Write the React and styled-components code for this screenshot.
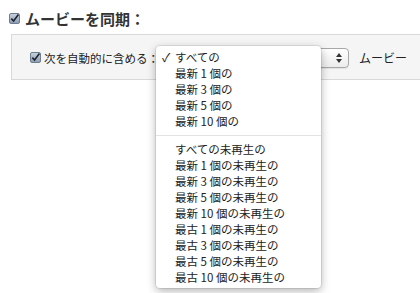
import React from 'react';
import styled, { createGlobalStyle } from 'styled-components';

const GlobalStyle = createGlobalStyle`
    body {
        margin: 0;
        background: #fff;
        font-family: "Noto Sans CJK JP", "Noto Sans", sans-serif;
        color: #222;
    }
`;

const Page = styled.div`
    width: 420px;
    height: 293px;
    overflow: hidden;
    padding: 8px 0 0 9px;
    box-sizing: border-box;
`;

const TitleRow = styled.div`
    display: flex;
    align-items: center;
    gap: 5px;
    height: 20px;
`;

const Title = styled.span`
    font-size: 15px;
    font-weight: bold;
    color: #333;
`;

const Box = styled.div`
    margin: 6px 0 0 2px;
    height: 44px;
    background: #f5f5f5;
    border: 1px solid #d9d9d9;
    border-right: none;
    display: flex;
    align-items: center;
    padding-left: 18px;
`;

const Row = styled.div`
    display: flex;
    align-items: center;
    gap: 3px;
    margin-top: 1px;
`;

const Label = styled.span`
    font-size: 11.5px;
    color: #222;
`;

const SelectWrap = styled.div`
    position: relative;
    width: 187px;
    height: 20px;
`;

const Select = styled.div`
    height: 100%;
    border: 1px solid #a8a8a8;
    border-radius: 4px;
    background: linear-gradient(#ffffff, #ececec);
    box-sizing: border-box;
    display: flex;
    align-items: center;
    justify-content: flex-end;
    padding-right: 6px;
    box-shadow: 0 1px 1px rgba(0, 0, 0, 0.08);
`;

const After = styled.span`
    font-size: 12px;
    margin-left: 7px;
`;

const Popup = styled.div`
    position: absolute;
    left: -6px;
    top: -2px;
    width: 165px;
    padding: 3px 0;
    background: #fff;
    border-radius: 4px;
    box-shadow: 0 0 0 1px rgba(0, 0, 0, 0.08), 0 3px 10px rgba(0, 0, 0, 0.3);
    z-index: 5;
`;

const Item = styled.div`
    height: 16px;
    line-height: 16px;
    font-size: 11.5px;
    color: #222;
    padding-left: 19px;
    position: relative;
    white-space: nowrap;
`;

const Check = styled.span`
    position: absolute;
    left: 6px;
    top: 0;
    font-size: 12px;
`;

const Separator = styled.div`
    height: 1px;
    background: #e3e3e3;
    margin: 6px 0 5px;
`;

const CheckBox = ({ size = 11 }) => (
    <svg width={size} height={size} viewBox="0 0 11 11">
        <defs>
            <linearGradient id="cb" x1="0" y1="0" x2="0" y2="1">
                <stop offset="0" stopColor="#c9d3de" />
                <stop offset="1" stopColor="#8c9bb0" />
            </linearGradient>
        </defs>
        <rect x="0.5" y="0.5" width="10" height="10" rx="1.5" fill="url(#cb)" stroke="#6f7d90" />
        <path d="M2.3 5.6 L4.6 8 L9.4 1.6" fill="none" stroke="#1d2430" strokeWidth="1.6" />
    </svg>
);

const Arrows = () => (
    <svg width="6" height="10" viewBox="0 0 6 10">
        <path d="M3 0 L6 4 L0 4 Z M3 10 L6 6 L0 6 Z" fill="#333" />
    </svg>
);

const firstGroup = ['最新 1 個の', '最新 3 個の', '最新 5 個の', '最新 10 個の'];
const secondGroup = [
    'すべての未再生の',
    '最新 1 個の未再生の',
    '最新 3 個の未再生の',
    '最新 5 個の未再生の',
    '最新 10 個の未再生の',
    '最古 1 個の未再生の',
    '最古 3 個の未再生の',
    '最古 5 個の未再生の',
    '最古 10 個の未再生の',
];

const App = () => {
    return (
        <Page>
            <GlobalStyle />
            <TitleRow>
                <CheckBox />
                <Title>ムービーを同期：</Title>
            </TitleRow>
            <Box>
                <Row>
                    <CheckBox />
                    <Label>次を自動的に含める：</Label>
                    <SelectWrap>
                        <Select>
                            <Arrows />
                        </Select>
                        <Popup>
                            <Item>
                                <Check>✓</Check>
                                すべての
                            </Item>
                            {firstGroup.map((t) => (
                                <Item key={t}>{t}</Item>
                            ))}
                            <Separator />
                            {secondGroup.map((t) => (
                                <Item key={t}>{t}</Item>
                            ))}
                        </Popup>
                    </SelectWrap>
                    <After>ムービー</After>
                </Row>
            </Box>
        </Page>
    );
};

export default App;
